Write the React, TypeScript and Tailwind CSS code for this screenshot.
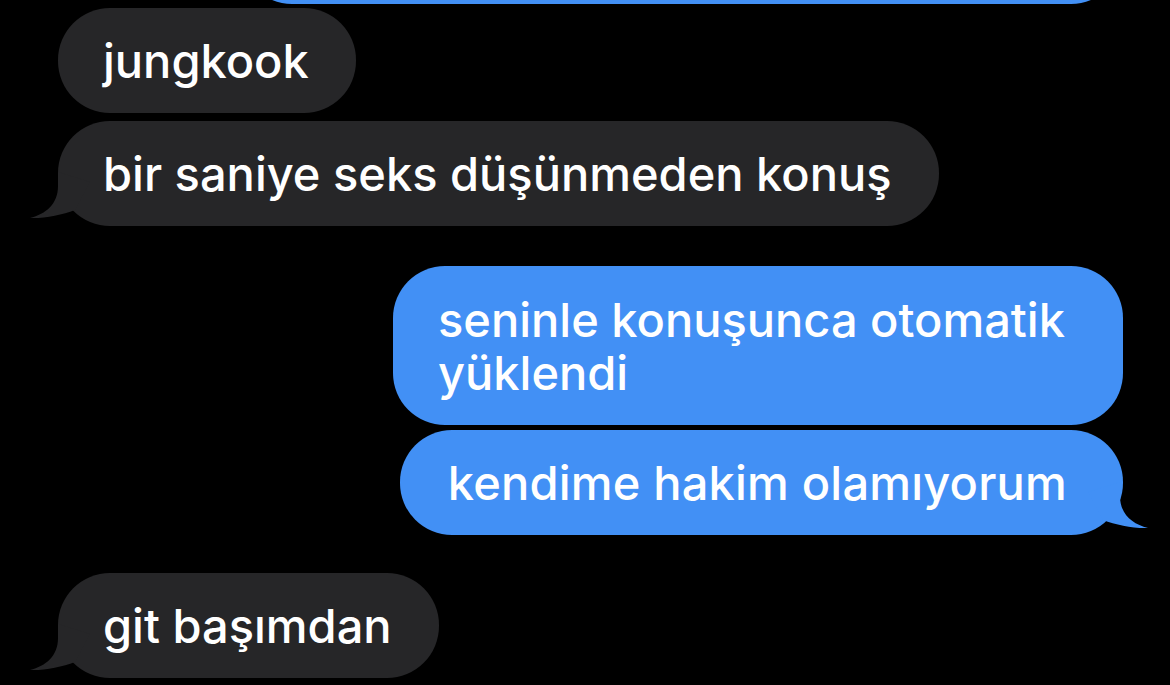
import type { ReactNode } from "react";

type Side = "in" | "out";

// little curled tail under the last bubble of a run
function Tail({ side }: { side: Side }) {
  const fill = side === "in" ? "#262628" : "#4290f5";
  return (
    <svg
      width="62"
      height="50"
      viewBox="0 0 62 50"
      className={
        side === "in"
          ? "absolute bottom-[4px] left-[-28px]"
          : "absolute bottom-[3px] right-[-25px] -scale-x-100"
      }
    >
      <path
        d="M28 0 L28 14 C28 32 16 42 0 46 C15 46.5 32 43 45 38 L60 10 Z"
        fill={fill}
      />
    </svg>
  );
}

function Bubble({
  side,
  tail,
  className = "",
  children,
}: {
  side: Side;
  tail?: boolean;
  className?: string;
  children: ReactNode;
}) {
  const base =
    side === "in"
      ? "self-start ml-[58px] bg-[#262628] pl-[45px] pr-[47px]"
      : "self-end mr-[47px] bg-[#4290f5] pl-[45px] pr-[56px]";
  return (
    <div className={`relative rounded-[52px] py-[26px] text-white ${base} ${className}`}>
      {tail && <Tail side={side} />}
      <span className="relative">{children}</span>
    </div>
  );
}

export default function App() {
  return (
    <div className="h-[685px] w-full overflow-hidden bg-black font-['Inter',sans-serif] text-[47px] font-medium leading-[53px]">
      <div className="flex flex-col">
        {/* previous sent bubble, scrolled mostly out of view */}
        <div className="self-end mr-[47px] -mt-[100px] h-[104px] w-[883px] rounded-[52px] bg-[#4290f5]" />

        <Bubble side="in" className="mt-[4px]">
          jungkook
        </Bubble>
        <Bubble side="in" tail className="mt-[8px]">
          bir saniye seks düşünmeden konuş
        </Bubble>

        <Bubble side="out" className="mt-[40px] w-[730px] pt-[27px] pr-[40px]">
          seninle konuşunca otomatik yüklendi
        </Bubble>
        <Bubble side="out" tail className="mt-[5px] pl-[48px] tracking-[0.2px]">
          kendime hakim olamıyorum
        </Bubble>

        <Bubble side="in" tail className="mt-[38px]">
          git başımdan
        </Bubble>
      </div>
    </div>
  );
}
